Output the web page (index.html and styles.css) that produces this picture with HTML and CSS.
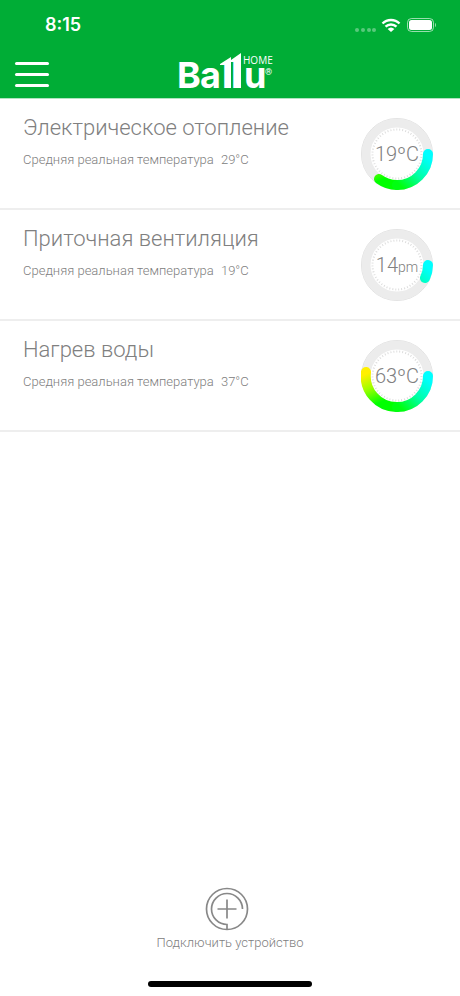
FILE: index.html
```html
<!DOCTYPE html>
<html lang="ru">
<head>
<meta charset="utf-8">
<meta name="viewport" content="width=device-width, initial-scale=1">
<title>Ballu Home</title>
<link rel="stylesheet" href="styles.css">
</head>
<body>
<header class="top">
  <div class="status">
    <span class="time">8:15</span>
    <svg class="status-icons" width="82" height="16" viewBox="0 0 82 16" aria-hidden="true">
      <g fill="#fff" opacity=".35"><circle cx="3" cy="13" r="2"/><circle cx="9" cy="13" r="2"/><circle cx="15" cy="13" r="2"/><circle cx="20" cy="13" r="2"/></g>
      <g fill="none" stroke="#fff" stroke-width="2.4"><path d="M28.500 6.500a12 12 0 0 1 17 0"/><path d="M31.500 9.700a8 8 0 0 1 11 0"/></g>
      <path fill="#fff" d="M33.600 12a5 5 0 0 1 6.800 0L37 15z"/>
      <rect x="53.500" y="1.500" width="26" height="13" rx="4" fill="none" stroke="#fff" opacity=".6"/>
      <rect x="55" y="3" width="23" height="10" rx="2.500" fill="#fff"/>
      <path d="M81 6c1.300.5 1.300 3.500 0 4z" fill="#fff" opacity=".6"/>
    </svg>
  </div>
  <div class="bar">
    <button class="menu" type="button" aria-label="Меню"><span></span><span></span><span></span></button>
    <svg class="logo" width="96" height="48" viewBox="0 0 96 48" role="img" aria-label="Ballu Home">
      <text class="brand" x="-1 22 44 53 66" y="38">Ballu</text>
      <path fill="#fff" d="M42 14L53 7V38H47V15H42zM53 10L63 3V38H56V12H53z"/>
      <text class="home" x="65" y="14">HOME</text>
      <text class="reg" x="87" y="25">®</text>
    </svg>
  </div>
</header>
<main class="devices">
  <a class="device" href="#heating">
    <div class="info"><h2>Электрическое отопление</h2><p>Средняя реальная температура <span>29°C</span></p></div>
    <svg class="gauge" width="72" height="72" viewBox="0 0 72 72">
      <defs>
        <linearGradient id="cool" gradientUnits="userSpaceOnUse" x1="66" y1="38" x2="38" y2="66"><stop offset="0" stop-color="#00ffff"/><stop offset=".5" stop-color="#00ffa8"/><stop offset="1" stop-color="#00ff10"/></linearGradient>
        <linearGradient id="warm" gradientUnits="userSpaceOnUse" x1="18" y1="63" x2="5" y2="34"><stop offset="0" stop-color="#00ff00"/><stop offset=".55" stop-color="#a0ff00"/><stop offset="1" stop-color="#fff000"/></linearGradient>
      </defs>
      <circle class="rim" cx="36" cy="36" r="35.500"/><circle class="track" cx="36" cy="36" r="31"/><circle class="ticks" cx="36" cy="36" r="24.500"/>
      <path class="arc" stroke="url(#warm)" d="M36 67A31 31 0 0 1 18 61"/><path class="arc" stroke="url(#cool)" d="M67 36A31 31 0 0 1 36 67"/>
      <text x="36" y="43">19ºC</text>
    </svg>
  </a>
  <a class="device" href="#ventilation">
    <div class="info"><h2>Приточная вентиляция</h2><p>Средняя реальная температура <span>19°C</span></p></div>
    <svg class="gauge" width="72" height="72" viewBox="0 0 72 72">
      <circle class="rim" cx="36" cy="36" r="35.500"/><circle class="track" cx="36" cy="36" r="31"/><circle class="ticks" cx="36" cy="36" r="24.500"/>
      <path class="arc" stroke="url(#cool)" d="M67 36A31 31 0 0 1 64 49"/>
      <text x="36" y="43">14<tspan class="unit">pm</tspan></text>
    </svg>
  </a>
  <a class="device" href="#water">
    <div class="info"><h2>Нагрев воды</h2><p>Средняя реальная температура <span>37°C</span></p></div>
    <svg class="gauge" width="72" height="72" viewBox="0 0 72 72">
      <circle class="rim" cx="36" cy="36" r="35.500"/><circle class="track" cx="36" cy="36" r="31"/><circle class="ticks" cx="36" cy="36" r="24.500"/>
      <path class="arc" stroke="url(#warm)" d="M36 67A31 31 0 0 1 5 32"/><path class="arc" stroke="url(#cool)" d="M67 36A31 31 0 0 1 36 67"/>
      <text x="36" y="43">63ºC</text>
    </svg>
  </a>
</main>
<footer class="bottom">
  <button class="connect" type="button">
    <svg width="50" height="44" viewBox="0 0 50 44" fill="none" stroke="#888" stroke-width="1.700" aria-hidden="true">
      <circle cx="22" cy="22" r="20.500"/><path d="M37.500 22A15.500 15.500 0 1 0 22 37.500V42M12.500 22H31.500M22 12.500V31.500"/>
    </svg>
    <span>Подключить устройство</span>
  </button>
  <div class="home-indicator"></div>
</footer>
</body>
</html>
```
FILE: styles.css
```css
* { box-sizing: border-box; }
body {
  margin: 0;
  min-height: 100vh;
  display: flex;
  flex-direction: column;
  background: #fff;
  color: #808080;
  font-family: Roboto, "Liberation Sans", sans-serif;
  font-weight: 300;
}
button { border: 0; padding: 0; background: none; color: inherit; font: inherit; cursor: pointer; }
.top { background: #00ad36; color: #fff; border-bottom: 1px solid #b0e4c0; }
.status {
  display: flex;
  align-items: center;
  justify-content: space-between;
  height: 50px;
  padding: 0 24px 0 45px;
}
.time { font-family: Inter, sans-serif; font-size: 18px; font-weight: 600; line-height: 24px; }
.bar {
  display: grid;
  grid-template-columns: 1fr auto 1fr;
  align-items: center;
  height: 48px;
  padding: 0 23px 0 15px;
}
.menu { display: flex; flex-direction: column; gap: 8px; width: 34px; }
.menu span { height: 3px; border-radius: 2px; background: #fff; }
.logo { grid-column: 2; overflow: visible; }
.logo text { fill: #fff; }
.brand { font-family: Inter, sans-serif; font-size: 36px; font-weight: 700; }
.home { font-family: "Open Sans", sans-serif; font-size: 10px; font-weight: 400; }
.reg { font-size: 9px; font-weight: 400; }
.devices { flex: 1; }
.device {
  display: flex;
  align-items: center;
  justify-content: space-between;
  height: 111px;
  padding: 0 27px 0 23px;
  border-bottom: 2px solid #eee;
  color: inherit;
  text-decoration: none;
}
.info { align-self: flex-start; padding-top: 14px; }
.info h2 { margin: 0; font-size: 22px; font-weight: 300; line-height: 30px; }
.info p { margin: 8px 0 0; font-size: 13px; line-height: 18px; }
.info span { margin-left: 4px; }
.gauge circle, .gauge path { fill: none; }
.rim { stroke: #ddd; }
.track { stroke: #ececec; stroke-width: 9px; }
.ticks { stroke: #ddd; stroke-width: 2px; stroke-dasharray: 1 2; }
.gauge .arc { stroke-width: 10px; stroke-linecap: round; }
.gauge text { fill: #808080; font-size: 20px; text-anchor: middle; }
.gauge .unit { font-size: 14px; }
.bottom { display: flex; flex-direction: column; align-items: center; padding-bottom: 9px; }
.connect { display: flex; flex-direction: column; align-items: center; gap: 3px; font-size: 13px; line-height: 18px; }
.home-indicator { width: 164px; height: 6px; margin-top: 29px; border-radius: 3px; background: #000; }
```
